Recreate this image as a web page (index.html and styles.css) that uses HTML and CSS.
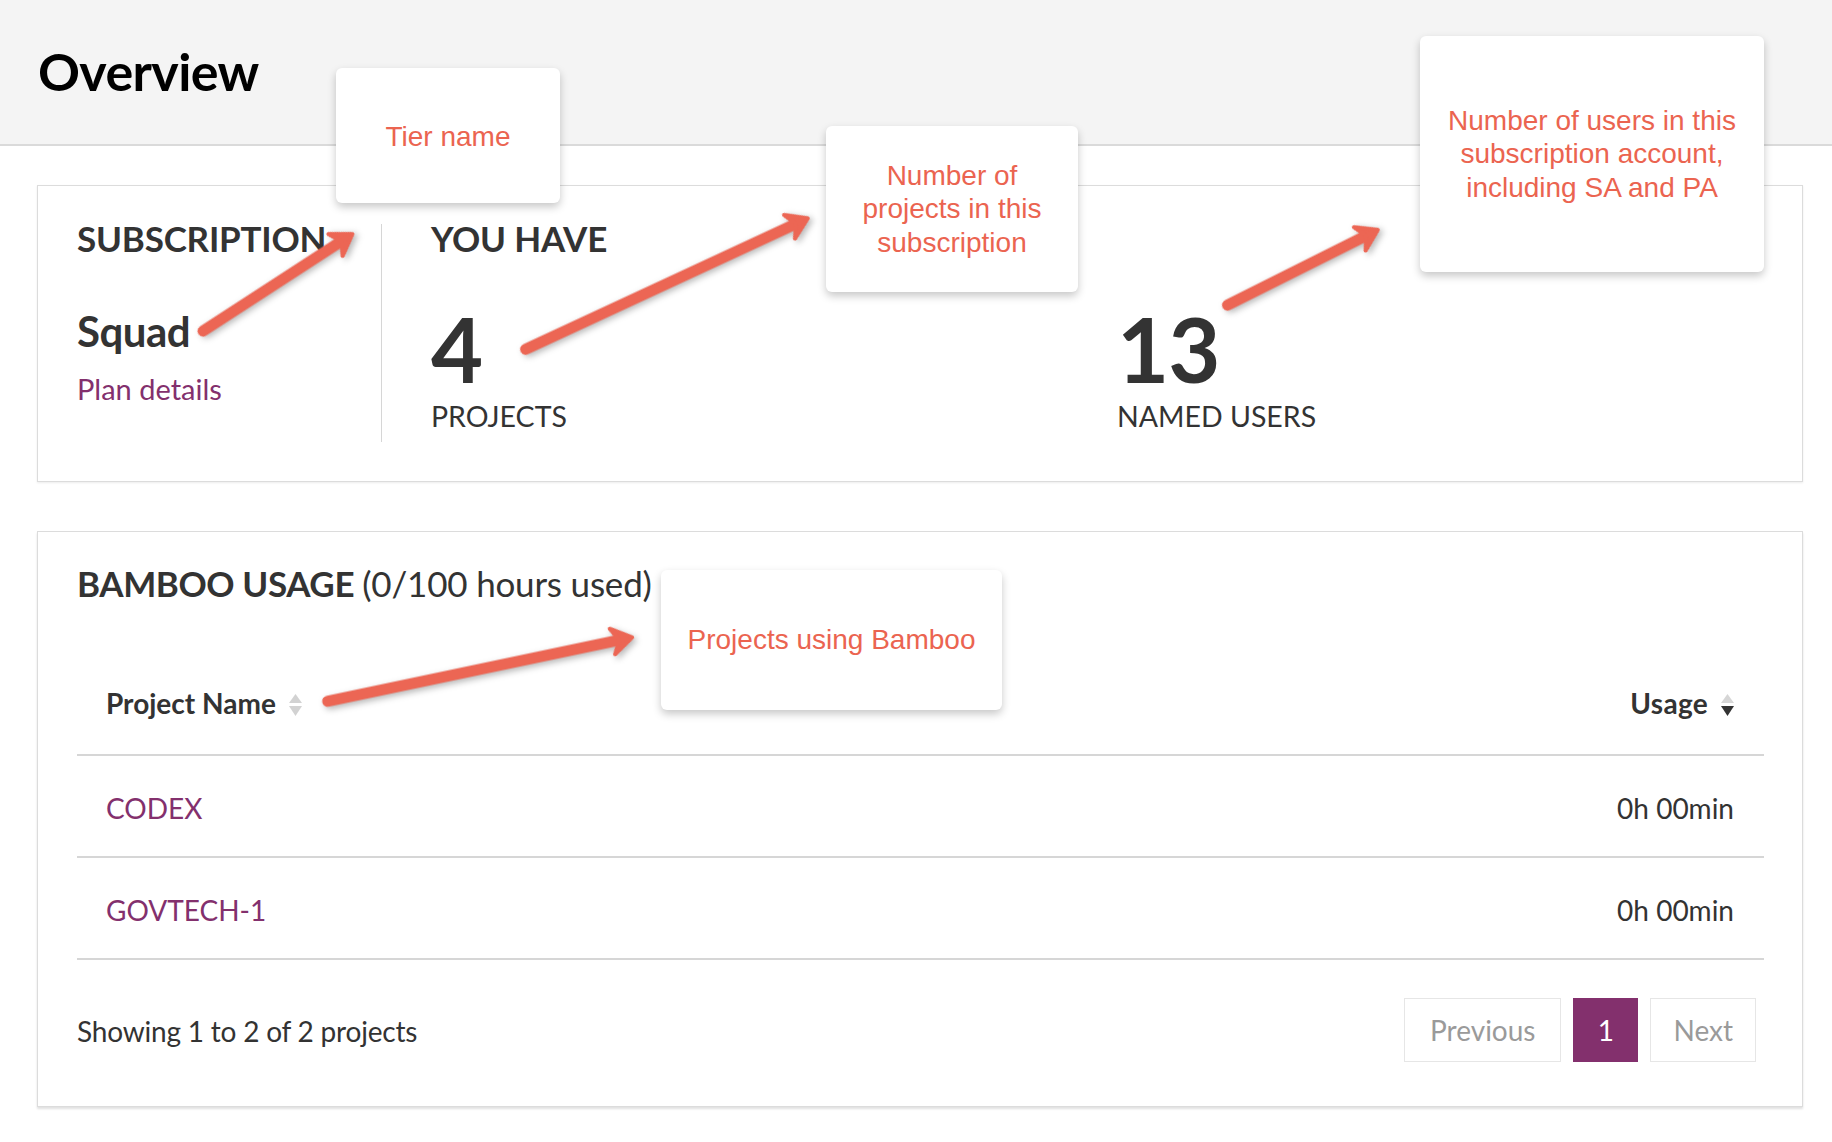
FILE: index.html
```html
<!DOCTYPE html>
<html lang="en">
<head>
<meta charset="utf-8">
<title>Overview</title>
<link rel="stylesheet" href="styles.css">
</head>
<body>
<header class="page-header">
  <h1 class="title">Overview</h1>
</header>
<main class="content">
  <section class="card card-summary">
    <div class="sub-col">
      <h2 class="card-heading">SUBSCRIPTION</h2>
      <div class="plan-name">Squad</div>
      <a class="link plan-link" href="#">Plan details</a>
    </div>
    <div class="divider"></div>
    <div class="stats-col">
      <h2 class="card-heading">YOU HAVE</h2>
      <div class="stats">
        <div class="stat stat-projects">
          <div class="stat-num">4</div>
          <div class="stat-label">PROJECTS</div>
        </div>
        <div class="stat">
          <div class="stat-num">13</div>
          <div class="stat-label">NAMED USERS</div>
        </div>
      </div>
    </div>
  </section>

  <section class="card card-usage">
    <h2 class="card-heading">BAMBOO USAGE <span class="light">(0/100 hours used)</span></h2>
    <table class="usage-table">
      <thead>
        <tr>
          <th class="col-name">Project Name<svg class="sort" width="13" height="22" viewBox="0 0 13 22"><polygon points="6.5,0 13,9 0,9" fill="#d2d2d2"/><polygon points="0,12 13,12 6.5,22" fill="#d2d2d2"/></svg></th>
          <th class="col-usage">Usage<svg class="sort" width="13" height="22" viewBox="0 0 13 22"><polygon points="6.5,0 13,9 0,9" fill="#d6d6d6"/><polygon points="0,12 13,12 6.5,22" fill="#333"/></svg></th>
        </tr>
      </thead>
      <tbody>
        <tr>
          <td class="col-name"><a class="link" href="#">CODEX</a></td>
          <td class="col-usage">0h 00min</td>
        </tr>
        <tr>
          <td class="col-name"><a class="link" href="#">GOVTECH-1</a></td>
          <td class="col-usage">0h 00min</td>
        </tr>
      </tbody>
    </table>
    <div class="table-footer">
      <div class="info">Showing 1 to 2 of 2 projects</div>
      <div class="pager">
        <span class="page-btn page-prev">Previous</span>
        <span class="page-btn current">1</span>
        <span class="page-btn page-next">Next</span>
      </div>
    </div>
  </section>
</main>

<div class="annotations">
  <div class="note note-tier">Tier name</div>
  <div class="note note-projects">Number of<br>projects in this<br>subscription</div>
  <div class="note note-users">Number of users in this<br>subscription account,<br>including SA and PA</div>
  <div class="note note-bamboo">Projects using Bamboo</div>
  <svg class="arrows" width="1832" height="1142" viewBox="0 0 1832 1142">
    <g class="arrow" transform="translate(354 233) rotate(-33)">
      <line x1="-180" y1="0" x2="-14" y2="0"/>
      <polygon points="-2,0 -22,-13 -15,0 -22,13"/>
    </g>
    <g class="arrow" transform="translate(809.5 217.5) rotate(-24.9)">
      <line x1="-313" y1="0" x2="-14" y2="0"/>
      <polygon points="-2,0 -22,-13 -15,0 -22,13"/>
    </g>
    <g class="arrow" transform="translate(1379.5 229) rotate(-26.6)">
      <line x1="-170" y1="0" x2="-14" y2="0"/>
      <polygon points="-2,0 -22,-13 -15,0 -22,13"/>
    </g>
    <g class="arrow" transform="translate(634 637) rotate(-11.85)">
      <line x1="-313" y1="0" x2="-14" y2="0"/>
      <polygon points="-2,0 -22,-13 -15,0 -22,13"/>
    </g>
  </svg>
</div>
</body>
</html>
```

FILE: styles.css
```css
html, body {
  margin: 0;
  padding: 0;
  background: #ffffff;
}

body {
  position: relative;
  width: 1832px;
  min-height: 1142px;
  font-family: Lato, "Open Sans", sans-serif;
  color: #333333;
}

.page-header {
  box-sizing: border-box;
  height: 146px;
  padding: 40px 0 0 38px;
  background: #f4f4f4;
  border-bottom: 2px solid #dadada;
}

.title {
  margin: 0;
  font-size: 52px;
  line-height: 1.2;
  font-weight: 700;
  color: #000000;
  letter-spacing: -0.6px;
}

.content {
  padding: 39px 29px 0 37px;
}

.card {
  background: #ffffff;
  border: 1px solid #dcdcdc;
  box-shadow: 0 1px 2px rgba(0, 0, 0, 0.08);
  padding: 31px 38px 39px 39px;
}

.card-heading {
  margin: 0;
  font-size: 35px;
  line-height: 1.2;
  font-weight: 700;
  color: #333333;
  letter-spacing: -0.4px;
}

.card-summary .card-heading {
  letter-spacing: -0.2px;
}

.card-heading .light {
  font-weight: 400;
  letter-spacing: -0.2px;
}

.card-summary {
  display: flex;
  align-items: flex-start;
}

.sub-col {
  width: 304px;
  display: flex;
  flex-direction: column;
  align-items: flex-start;
}

.plan-name {
  margin-top: 47px;
  font-size: 42px;
  line-height: 1.2;
  font-weight: 700;
  letter-spacing: -0.5px;
}

.link {
  color: #83306d;
  text-decoration: none;
}

.plan-link {
  margin-top: 16px;
  font-size: 29px;
  line-height: 1.2;
}

.divider {
  width: 1px;
  height: 218px;
  margin-top: 7px;
  background: #d6d6d6;
}

.stats-col {
  margin-left: 49px;
  flex: 1;
}

.stats {
  display: flex;
}

.stat-projects {
  width: 686px;
}

.stat-num {
  margin-top: 44px;
  font-size: 90px;
  line-height: 1;
  font-weight: 700;
  letter-spacing: -1px;
}

.stat-label {
  margin-top: 6px;
  font-size: 28.5px;
  line-height: 1.2;
  font-weight: 400;
}

.card-usage {
  margin-top: 49px;
  padding: 30px 38px 44px 39px;
  box-shadow: 0 2px 2px rgba(0, 0, 0, 0.12);
}

.usage-table {
  width: 100%;
  margin-top: 48px;
  border-collapse: collapse;
  font-size: 28px;
  line-height: 32px;
}

.usage-table th {
  font-weight: 700;
  padding: 35px 30px 35px 29px;
  border-bottom: 2px solid #d6d6d6;
}

.usage-table th.col-usage {
  letter-spacing: 0.3px;
}

.usage-table td {
  padding: 36px 30px 32px 29px;
  border-bottom: 2px solid #d6d6d6;
}

.col-name {
  text-align: left;
}

.col-usage {
  text-align: right;
}

.sort {
  display: inline-block;
  margin-left: 13px;
  vertical-align: -2px;
}

.table-footer {
  margin-top: 38px;
  padding-right: 8px;
  display: flex;
  align-items: center;
  justify-content: space-between;
}

.info {
  margin-top: 4px;
  font-size: 28px;
  line-height: 1.2;
  letter-spacing: -0.2px;
}

.pager {
  display: flex;
  gap: 12px;
}

.page-btn {
  box-sizing: border-box;
  height: 64px;
  display: flex;
  align-items: center;
  justify-content: center;
  font-size: 28px;
  border: 1px solid #e6e6e6;
  color: #9a9a9a;
  background: #ffffff;
}

.page-prev {
  padding: 0 25px;
}

.page-next {
  padding: 0 22px;
}

.page-btn.current {
  background: #83306d;
  border-color: #83306d;
  color: #ffffff;
  width: 65px;
}

/* annotation overlay */
.annotations {
  position: absolute;
  left: 0;
  top: 0;
  width: 1832px;
  height: 1142px;
  pointer-events: none;
}

.note {
  position: absolute;
  box-sizing: border-box;
  display: flex;
  align-items: center;
  justify-content: center;
  text-align: center;
  background: #ffffff;
  border-radius: 6px;
  box-shadow: 0 4px 9px rgba(0, 0, 0, 0.22);
  font-family: "Liberation Sans", Arial, sans-serif;
  font-size: 28px;
  line-height: 33.5px;
  color: #eb6450;
}

.note-tier {
  left: 336px;
  top: 68px;
  width: 224px;
  height: 135px;
  padding-top: 2px;
}

.note-projects {
  left: 826px;
  top: 126px;
  width: 252px;
  height: 166px;
}

.note-users {
  left: 1420px;
  top: 36px;
  width: 344px;
  height: 236px;
}

.note-bamboo {
  left: 661px;
  top: 570px;
  width: 341px;
  height: 140px;
}

.arrows {
  position: absolute;
  left: 0;
  top: 0;
}

.arrow {
  filter: drop-shadow(2px 3px 3px rgba(0, 0, 0, 0.28));
}

.arrow line {
  stroke: #ec6654;
  stroke-width: 11;
  stroke-linecap: round;
}

.arrow polygon {
  fill: #ec6654;
  stroke: #ec6654;
  stroke-width: 4;
  stroke-linejoin: round;
}
```
